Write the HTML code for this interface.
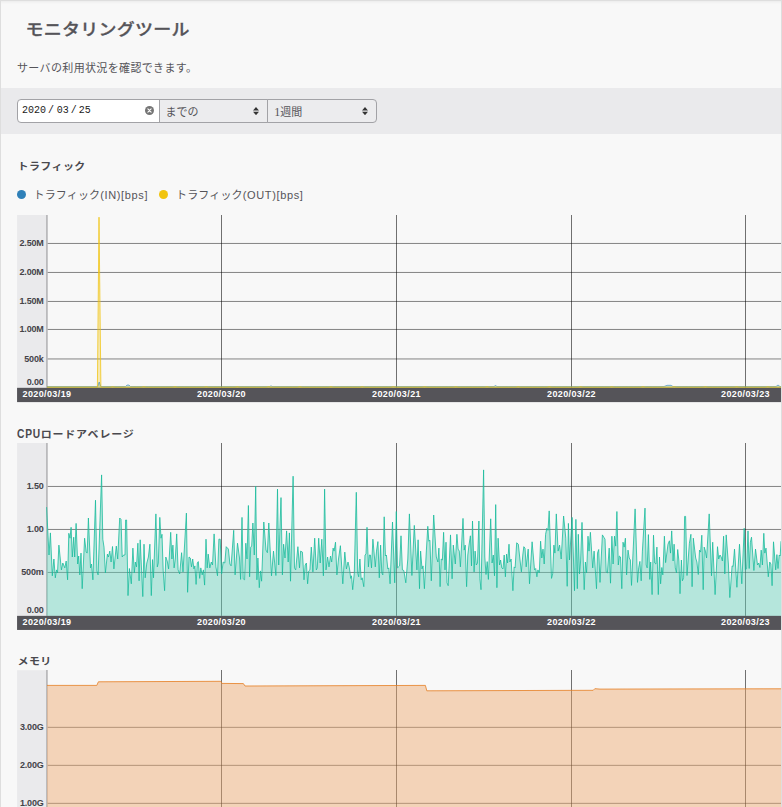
<!DOCTYPE html>
<html lang="ja">
<head>
<meta charset="utf-8">
<title>モニタリングツール</title>
<style>
html,body{margin:0;padding:0;}
body{width:782px;height:807px;overflow:hidden;background:#f8f8f8;font-family:"Liberation Sans","Noto Sans CJK JP",sans-serif;color:#555459;position:relative;}
.frame{position:absolute;left:0;top:0;width:782px;height:830px;box-sizing:border-box;border:1px solid #dedede;box-shadow:inset 0 3px 3px -2px rgba(0,0,0,0.06);pointer-events:none;}
h1{position:absolute;left:25.5px;top:16.4px;margin:0;font-size:18px;line-height:26px;font-weight:500;-webkit-text-stroke:0.35px #555459;transform:scaleY(0.91);transform-origin:0 13.5px;color:#555459;letter-spacing:0.25px;white-space:nowrap;}
.lead{position:absolute;left:17px;top:59px;margin:0;font-size:11px;line-height:18px;color:#555459;white-space:nowrap;letter-spacing:0.35px;}
.bar{position:absolute;left:1px;top:88px;width:780px;height:45.6px;background:#eaeaec;}
.ctl{position:absolute;top:99px;height:24px;box-sizing:border-box;border:1px solid #a2a2a6;font-size:11px;line-height:25.6px;color:#555459;white-space:nowrap;}
.date{left:17px;width:143px;background:#fff;border-radius:4px 0 0 4px;font-family:"Liberation Mono",monospace;color:#1a1a1a;padding-left:4px;font-size:10px;line-height:22px;}
.date i{font-style:normal;margin:0 2.8px 0 2px;}
.sel1{left:159px;width:109px;background:#ececee;padding-left:5.6px;}
.sel2{left:267px;width:110px;background:#ececee;border-radius:0 4px 4px 0;padding-left:6.3px;}
.arrow{position:absolute;right:8px;top:6.9px;width:6px;height:8.2px;}
.clear{position:absolute;left:127px;top:6px;width:9px;height:9px;}
h2{position:absolute;left:17.5px;margin:0;font-size:11px;line-height:16px;font-weight:700;color:#4a494e;white-space:nowrap;letter-spacing:0.4px;transform:scaleY(0.9);transform-origin:0 8.5px;}
.legend{position:absolute;top:187px;left:17px;font-size:11px;line-height:16px;color:#555459;white-space:nowrap;letter-spacing:0.15px;}
.legend b{font-weight:400;letter-spacing:0.65px;}
.dot{position:absolute;top:190px;width:9px;height:9px;border-radius:50%;}
.chart{position:absolute;left:0;}
.chart text{font-family:"Liberation Sans","Noto Sans CJK JP",sans-serif;font-size:9px;font-weight:700;letter-spacing:-0.15px;}
.chart .yl{fill:#444348;}
.chart .xl{fill:#fff;letter-spacing:0.38px;}
</style>
</head>
<body>
<h1>モニタリングツール</h1>
<p class="lead">サーバの利用状況を確認できます。</p>
<div class="bar"></div>
<div class="ctl date">2020<i>/</i>03<i style="margin-right:2px">/</i>25<svg class="clear" viewBox="0 0 9 9"><circle cx="4.5" cy="4.5" r="4.5" fill="#757575"/><path d="M2.9 2.9 L6.1 6.1 M6.1 2.9 L2.9 6.1" stroke="#fff" stroke-width="1.1" stroke-linecap="round"/></svg></div>
<div class="ctl sel1">までの<svg class="arrow" viewBox="0 0 6 8.2"><path d="M3 0 L6 3.5 L0 3.5 Z M3 8.2 L6 4.7 L0 4.7 Z" fill="#333"/></svg></div>
<div class="ctl sel2"><span style="font-family:'Liberation Serif','Noto Sans CJK JP',serif;font-size:12px">1</span>週間<svg class="arrow" viewBox="0 0 6 8.2"><path d="M3 0 L6 3.5 L0 3.5 Z M3 8.2 L6 4.7 L0 4.7 Z" fill="#333"/></svg></div>

<h2 style="top:158px">トラフィック</h2>
<span class="dot" style="left:17px;background:#2f80b8"></span>
<span class="legend" style="left:33.5px">トラフィック<b>(IN)[bps]</b></span>
<span class="dot" style="left:159px;background:#f1c40f"></span>
<span class="legend" style="left:176px">トラフィック<b>(OUT)[bps]</b></span>
<svg class="chart" style="top:215px" width="782" height="188" viewBox="0 0 782 188">
<rect x="17.06" y="0" width="28.94" height="172.8" fill="#eaeaec"/>
<rect x="46.8" y="27.95" width="734.2" height="1" fill="#000" fill-opacity="0.47"/>
<rect x="46.8" y="56.95" width="734.2" height="1" fill="#000" fill-opacity="0.47"/>
<rect x="46.8" y="85.95" width="734.2" height="1" fill="#000" fill-opacity="0.47"/>
<rect x="46.8" y="113.95" width="734.2" height="1" fill="#000" fill-opacity="0.47"/>
<rect x="46.8" y="143.45" width="734.2" height="1" fill="#000" fill-opacity="0.47"/>
<rect x="221.00" y="0" width="1" height="172.8" fill="#000" fill-opacity="0.55"/>
<rect x="396.00" y="0" width="1" height="172.8" fill="#000" fill-opacity="0.55"/>
<rect x="571.00" y="0" width="1" height="172.8" fill="#000" fill-opacity="0.55"/>
<rect x="745.00" y="0" width="1" height="172.8" fill="#000" fill-opacity="0.55"/>
<rect x="46" y="0" width="1.8" height="172.8" fill="#bababc"/>
<polygon points="47.0,172.8 47.0,171.5 97.6,171.5 99.2,167.0 100.8,171.5 125.5,171.5 127.0,170.0 129.0,170.0 130.5,171.5 270.0,171.5 271.0,170.7 272.0,171.5 494.0,171.5 495.5,170.5 497.0,171.5 664.0,171.5 667.0,170.3 671.0,170.3 673.0,171.5 776.0,171.5 778.0,170.0 780.0,171.5 781.0,171.5 781.0,172.8" fill="#2980b9" fill-opacity="0.3"/><polygon points="47.0,172.8 47.0,172.2 97.4,172.2 99.0,2.2 100.9,172.2 103.0,172.2 105.4,172.2 107.8,172.2 110.2,172.2 112.6,171.7 115.0,172.2 117.4,172.2 119.8,172.2 122.2,172.2 124.6,172.2 127.0,172.2 129.4,172.2 131.8,172.2 134.2,172.2 136.6,172.2 139.0,172.2 141.4,172.2 143.8,171.7 146.2,172.2 148.6,172.2 151.0,172.2 153.4,172.2 155.8,172.2 158.2,172.2 160.6,172.2 163.0,172.2 165.4,172.2 167.8,172.2 170.2,172.2 172.6,172.2 175.0,171.7 177.4,172.2 179.8,172.2 182.2,172.2 184.6,172.2 187.0,172.2 189.4,172.2 191.8,172.2 194.2,172.2 196.6,172.2 199.0,172.2 201.4,172.2 203.8,172.2 206.2,171.7 208.6,172.2 211.0,172.2 213.4,172.2 215.8,172.2 218.2,172.2 220.6,172.2 223.0,172.2 225.4,172.2 227.8,172.2 230.2,172.2 232.6,172.2 235.0,172.2 237.4,171.7 239.8,172.2 242.2,172.2 244.6,172.2 247.0,172.2 249.4,172.2 251.8,172.2 254.2,172.2 256.6,172.2 259.0,172.2 261.4,172.2 263.8,172.2 266.2,172.2 268.6,171.7 271.0,172.2 273.4,172.2 275.8,172.2 278.2,172.2 280.6,172.2 283.0,172.2 285.4,172.2 287.8,172.2 290.2,172.2 292.6,172.2 295.0,172.2 297.4,172.2 299.8,171.7 302.2,172.2 304.6,172.2 307.0,172.2 309.4,172.2 311.8,172.2 314.2,172.2 316.6,172.2 319.0,172.2 321.4,172.2 323.8,172.2 326.2,172.2 328.6,172.2 331.0,171.7 333.4,172.2 335.8,172.2 338.2,172.2 340.6,172.2 343.0,172.2 345.4,172.2 347.8,172.2 350.2,172.2 352.6,172.2 355.0,172.2 357.4,172.2 359.8,172.2 362.2,171.7 364.6,172.2 367.0,172.2 369.4,172.2 371.8,172.2 374.2,172.2 376.6,172.2 379.0,172.2 381.4,172.2 383.8,172.2 386.2,172.2 388.6,172.2 391.0,172.2 393.4,171.7 395.8,172.2 398.2,172.2 400.6,172.2 403.0,172.2 405.4,172.2 407.8,172.2 410.2,172.2 412.6,172.2 415.0,172.2 417.4,172.2 419.8,172.2 422.2,172.2 424.6,171.7 427.0,172.2 429.4,172.2 431.8,172.2 434.2,172.2 436.6,172.2 439.0,172.2 441.4,172.2 443.8,172.2 446.2,172.2 448.6,172.2 451.0,172.2 453.4,172.2 455.8,171.7 458.2,172.2 460.6,172.2 463.0,172.2 465.4,172.2 467.8,172.2 470.2,172.2 472.6,172.2 475.0,172.2 477.4,172.2 479.8,172.2 482.2,172.2 484.6,172.2 487.0,171.7 489.4,172.2 491.8,172.2 494.2,172.2 496.6,172.2 499.0,172.2 501.4,172.2 503.8,172.2 506.2,172.2 508.6,172.2 511.0,172.2 513.4,172.2 515.8,172.2 518.2,171.7 520.6,172.2 523.0,172.2 525.4,172.2 527.8,172.2 530.2,172.2 532.6,172.2 535.0,172.2 537.4,172.2 539.8,172.2 542.2,172.2 544.6,172.2 547.0,172.2 549.4,171.7 551.8,172.2 554.2,172.2 556.6,172.2 559.0,172.2 561.4,172.2 563.8,172.2 566.2,172.2 568.6,172.2 571.0,172.2 573.4,172.2 575.8,172.2 578.2,172.2 580.6,171.7 583.0,172.2 585.4,172.2 587.8,172.2 590.2,172.2 592.6,172.2 595.0,172.2 597.4,172.2 599.8,172.2 602.2,172.2 604.6,172.2 607.0,172.2 609.4,172.2 611.8,171.7 614.2,172.2 616.6,172.2 619.0,172.2 621.4,172.2 623.8,172.2 626.2,172.2 628.6,172.2 631.0,172.2 633.4,172.2 635.8,172.2 638.2,172.2 640.6,172.2 643.0,171.7 645.4,172.2 647.8,172.2 650.2,172.2 652.6,172.2 655.0,172.2 657.4,172.2 659.8,172.2 662.2,172.2 664.6,172.2 667.0,172.2 669.4,172.2 671.8,172.2 674.2,171.7 676.6,172.2 679.0,172.2 681.4,172.2 683.8,172.2 686.2,172.2 688.6,172.2 691.0,172.2 693.4,172.2 695.8,172.2 698.2,172.2 700.6,172.2 703.0,172.2 705.4,171.7 707.8,172.2 710.2,172.2 712.6,172.2 715.0,172.2 717.4,172.2 719.8,172.2 722.2,172.2 724.6,172.2 727.0,172.2 729.4,172.2 731.8,172.2 734.2,172.2 736.6,171.7 739.0,172.2 741.4,172.2 743.8,172.2 746.2,172.2 748.6,172.2 751.0,172.2 753.4,172.2 755.8,172.2 758.2,172.2 760.6,172.2 763.0,172.2 765.4,172.2 767.8,171.7 770.2,172.2 772.6,172.2 775.0,172.2 777.4,172.2 779.8,172.2 781.0,172.2 781.0,172.8" fill="#f1c40f" fill-opacity="0.3"/><polyline points="47.0,171.5 97.6,171.5 99.2,167.0 100.8,171.5 125.5,171.5 127.0,170.0 129.0,170.0 130.5,171.5 270.0,171.5 271.0,170.7 272.0,171.5 494.0,171.5 495.5,170.5 497.0,171.5 664.0,171.5 667.0,170.3 671.0,170.3 673.0,171.5 776.0,171.5 778.0,170.0 780.0,171.5 781.0,171.5" fill="none" stroke="#2980b9" stroke-width="0.9" stroke-opacity="0.6"/><polyline points="47.0,172.2 97.4,172.2 99.0,2.2 100.9,172.2 103.0,172.2 105.4,172.2 107.8,172.2 110.2,172.2 112.6,171.7 115.0,172.2 117.4,172.2 119.8,172.2 122.2,172.2 124.6,172.2 127.0,172.2 129.4,172.2 131.8,172.2 134.2,172.2 136.6,172.2 139.0,172.2 141.4,172.2 143.8,171.7 146.2,172.2 148.6,172.2 151.0,172.2 153.4,172.2 155.8,172.2 158.2,172.2 160.6,172.2 163.0,172.2 165.4,172.2 167.8,172.2 170.2,172.2 172.6,172.2 175.0,171.7 177.4,172.2 179.8,172.2 182.2,172.2 184.6,172.2 187.0,172.2 189.4,172.2 191.8,172.2 194.2,172.2 196.6,172.2 199.0,172.2 201.4,172.2 203.8,172.2 206.2,171.7 208.6,172.2 211.0,172.2 213.4,172.2 215.8,172.2 218.2,172.2 220.6,172.2 223.0,172.2 225.4,172.2 227.8,172.2 230.2,172.2 232.6,172.2 235.0,172.2 237.4,171.7 239.8,172.2 242.2,172.2 244.6,172.2 247.0,172.2 249.4,172.2 251.8,172.2 254.2,172.2 256.6,172.2 259.0,172.2 261.4,172.2 263.8,172.2 266.2,172.2 268.6,171.7 271.0,172.2 273.4,172.2 275.8,172.2 278.2,172.2 280.6,172.2 283.0,172.2 285.4,172.2 287.8,172.2 290.2,172.2 292.6,172.2 295.0,172.2 297.4,172.2 299.8,171.7 302.2,172.2 304.6,172.2 307.0,172.2 309.4,172.2 311.8,172.2 314.2,172.2 316.6,172.2 319.0,172.2 321.4,172.2 323.8,172.2 326.2,172.2 328.6,172.2 331.0,171.7 333.4,172.2 335.8,172.2 338.2,172.2 340.6,172.2 343.0,172.2 345.4,172.2 347.8,172.2 350.2,172.2 352.6,172.2 355.0,172.2 357.4,172.2 359.8,172.2 362.2,171.7 364.6,172.2 367.0,172.2 369.4,172.2 371.8,172.2 374.2,172.2 376.6,172.2 379.0,172.2 381.4,172.2 383.8,172.2 386.2,172.2 388.6,172.2 391.0,172.2 393.4,171.7 395.8,172.2 398.2,172.2 400.6,172.2 403.0,172.2 405.4,172.2 407.8,172.2 410.2,172.2 412.6,172.2 415.0,172.2 417.4,172.2 419.8,172.2 422.2,172.2 424.6,171.7 427.0,172.2 429.4,172.2 431.8,172.2 434.2,172.2 436.6,172.2 439.0,172.2 441.4,172.2 443.8,172.2 446.2,172.2 448.6,172.2 451.0,172.2 453.4,172.2 455.8,171.7 458.2,172.2 460.6,172.2 463.0,172.2 465.4,172.2 467.8,172.2 470.2,172.2 472.6,172.2 475.0,172.2 477.4,172.2 479.8,172.2 482.2,172.2 484.6,172.2 487.0,171.7 489.4,172.2 491.8,172.2 494.2,172.2 496.6,172.2 499.0,172.2 501.4,172.2 503.8,172.2 506.2,172.2 508.6,172.2 511.0,172.2 513.4,172.2 515.8,172.2 518.2,171.7 520.6,172.2 523.0,172.2 525.4,172.2 527.8,172.2 530.2,172.2 532.6,172.2 535.0,172.2 537.4,172.2 539.8,172.2 542.2,172.2 544.6,172.2 547.0,172.2 549.4,171.7 551.8,172.2 554.2,172.2 556.6,172.2 559.0,172.2 561.4,172.2 563.8,172.2 566.2,172.2 568.6,172.2 571.0,172.2 573.4,172.2 575.8,172.2 578.2,172.2 580.6,171.7 583.0,172.2 585.4,172.2 587.8,172.2 590.2,172.2 592.6,172.2 595.0,172.2 597.4,172.2 599.8,172.2 602.2,172.2 604.6,172.2 607.0,172.2 609.4,172.2 611.8,171.7 614.2,172.2 616.6,172.2 619.0,172.2 621.4,172.2 623.8,172.2 626.2,172.2 628.6,172.2 631.0,172.2 633.4,172.2 635.8,172.2 638.2,172.2 640.6,172.2 643.0,171.7 645.4,172.2 647.8,172.2 650.2,172.2 652.6,172.2 655.0,172.2 657.4,172.2 659.8,172.2 662.2,172.2 664.6,172.2 667.0,172.2 669.4,172.2 671.8,172.2 674.2,171.7 676.6,172.2 679.0,172.2 681.4,172.2 683.8,172.2 686.2,172.2 688.6,172.2 691.0,172.2 693.4,172.2 695.8,172.2 698.2,172.2 700.6,172.2 703.0,172.2 705.4,171.7 707.8,172.2 710.2,172.2 712.6,172.2 715.0,172.2 717.4,172.2 719.8,172.2 722.2,172.2 724.6,172.2 727.0,172.2 729.4,172.2 731.8,172.2 734.2,172.2 736.6,171.7 739.0,172.2 741.4,172.2 743.8,172.2 746.2,172.2 748.6,172.2 751.0,172.2 753.4,172.2 755.8,172.2 758.2,172.2 760.6,172.2 763.0,172.2 765.4,172.2 767.8,171.7 770.2,172.2 772.6,172.2 775.0,172.2 777.4,172.2 779.8,172.2 781.0,172.2" fill="none" stroke="#f1c40f" stroke-width="0.95" stroke-opacity="0.8" stroke-linejoin="round"/><rect x="47" y="171.65" width="734" height="1.15" fill="#d9c52a" fill-opacity="0.6"/>
<rect x="17.06" y="172.8" width="763.94" height="14.3" fill="#555459"/>
<text class="xl" x="47.0" y="181.8" text-anchor="middle">2020/03/19</text>
<text class="xl" x="221.5" y="181.8" text-anchor="middle">2020/03/20</text>
<text class="xl" x="396.5" y="181.8" text-anchor="middle">2020/03/21</text>
<text class="xl" x="571.5" y="181.8" text-anchor="middle">2020/03/22</text>
<text class="xl" x="745.5" y="181.8" text-anchor="middle">2020/03/23</text>
<text class="yl" x="43.7" y="31.0" text-anchor="end">2.50M</text>
<text class="yl" x="43.7" y="60.0" text-anchor="end">2.00M</text>
<text class="yl" x="43.7" y="89.0" text-anchor="end">1.50M</text>
<text class="yl" x="43.7" y="117.0" text-anchor="end">1.00M</text>
<text class="yl" x="43.7" y="147.0" text-anchor="end">500k</text>
<text class="yl" x="43.7" y="170.2" text-anchor="end">0.00</text>
</svg>

<h2 style="top:426px;letter-spacing:0.8px"><span style="display:inline-block;transform:scale(0.93,1.24);transform-origin:0 11.8px;margin-right:-2px;margin-left:-0.5px">CPU</span>ロードアベレージ</h2>
<svg class="chart" style="top:443px" width="782" height="188" viewBox="0 0 782 188">
<rect x="17.06" y="0" width="28.94" height="172.85000000000002" fill="#eaeaec"/>
<rect x="46.8" y="42.95" width="734.2" height="1" fill="#000" fill-opacity="0.47"/>
<rect x="46.8" y="85.95" width="734.2" height="1" fill="#000" fill-opacity="0.47"/>
<rect x="46.8" y="128.95" width="734.2" height="1" fill="#000" fill-opacity="0.47"/>
<rect x="221.00" y="0" width="1" height="172.85000000000002" fill="#000" fill-opacity="0.55"/>
<rect x="396.00" y="0" width="1" height="172.85000000000002" fill="#000" fill-opacity="0.55"/>
<rect x="571.00" y="0" width="1" height="172.85000000000002" fill="#000" fill-opacity="0.55"/>
<rect x="745.00" y="0" width="1" height="172.85000000000002" fill="#000" fill-opacity="0.55"/>
<rect x="46" y="0" width="1.8" height="172.85000000000002" fill="#bababc"/>
<polygon points="46.6,172.9 46.6,64.1 49.0,112.0 50.4,89.9 52.3,132.8 53.9,116.0 55.3,134.8 56.5,126.9 57.5,129.9 58.9,102.1 61.4,126.9 62.8,120.0 64.8,124.9 66.2,118.0 67.6,136.8 68.8,90.3 70.0,95.2 71.1,84.3 72.3,114.0 73.7,94.2 74.7,114.0 76.1,80.4 77.7,121.0 78.7,113.0 79.8,131.9 81.0,110.1 82.2,145.7 84.6,95.2 86.2,109.1 87.2,110.1 88.4,75.0 90.5,124.9 91.5,121.0 92.9,136.8 95.5,57.2 96.9,127.9 98.1,131.9 101.6,31.9 102.8,96.2 104.0,104.1 105.4,129.9 107.4,111.1 108.4,114.0 109.8,108.1 111.1,119.0 112.5,103.5 113.9,125.9 116.3,103.1 117.7,116.0 119.7,75.0 121.0,76.4 122.2,114.0 123.6,112.0 125.0,112.0 125.6,77.0 126.6,77.0 128.0,152.6 129.4,125.5 131.3,140.8 132.9,105.1 134.3,129.9 135.3,119.0 136.5,123.9 137.9,100.2 139.1,137.8 140.2,96.8 141.6,127.9 142.8,153.6 144.0,101.2 145.2,134.8 146.8,120.0 148.4,114.0 149.9,101.2 151.3,152.6 152.5,116.6 153.5,134.8 155.9,70.9 157.3,123.9 158.3,120.0 159.8,74.4 161.0,95.2 162.0,91.3 163.2,127.9 164.6,147.7 165.8,114.0 167.2,118.0 168.6,125.9 170.7,89.3 171.9,116.0 172.9,102.1 174.1,124.9 175.3,116.0 176.7,90.9 178.1,126.9 179.7,130.9 181.6,109.7 183.0,128.9 186.4,70.1 187.6,149.3 189.0,114.0 190.3,115.0 191.5,123.9 192.7,116.0 193.9,125.9 194.9,122.9 196.1,141.4 197.3,120.0 198.3,118.6 199.7,135.4 200.8,124.9 202.2,131.9 203.4,126.9 204.6,142.1 206.0,96.2 207.2,124.9 208.2,111.1 209.8,124.9 211.3,119.0 212.5,122.0 214.1,90.9 215.9,123.9 217.5,132.8 218.9,96.2 220.2,96.2 221.6,130.9 223.2,119.0 224.8,120.0 226.2,103.7 228.4,106.1 229.9,121.0 231.1,122.9 233.7,87.3 235.1,131.9 237.5,100.2 239.5,115.0 240.6,136.4 242.0,74.4 243.2,135.8 244.6,136.8 245.8,100.2 247.0,116.0 248.4,62.5 249.6,133.8 250.7,104.1 251.7,103.1 252.9,80.0 254.3,112.0 255.7,43.3 256.9,136.8 257.9,115.0 259.3,144.7 260.4,127.9 261.6,138.2 263.8,79.0 266.0,107.1 267.4,109.7 268.8,80.0 271.5,132.8 273.5,108.1 275.9,132.5 277.5,46.1 278.7,122.0 281.0,54.6 282.4,131.9 283.6,101.2 285.0,115.0 286.6,87.9 288.2,119.0 289.4,89.9 290.5,138.2 293.1,33.2 294.5,124.9 295.7,126.9 297.9,103.7 299.5,124.9 300.6,108.1 302.4,109.1 304.0,136.8 305.2,122.0 306.4,120.0 307.6,140.8 308.8,127.9 309.9,126.9 311.3,104.1 312.9,128.9 314.7,95.2 316.3,126.9 317.3,124.9 318.7,95.2 320.2,120.0 321.8,96.2 323.4,132.8 324.6,46.1 326.0,126.9 327.6,114.0 329.0,123.9 330.5,113.0 331.7,119.0 333.1,105.1 334.1,108.1 335.5,99.2 336.9,131.9 338.5,116.0 340.4,102.7 342.8,140.8 344.8,109.1 346.4,125.9 348.0,119.0 349.4,124.9 350.7,135.4 351.5,132.8 352.7,146.7 354.3,129.9 356.3,49.3 357.7,129.9 358.7,133.8 359.9,116.0 361.2,136.8 362.2,134.8 363.8,143.7 365.0,112.0 366.0,111.1 367.0,84.3 368.4,123.9 369.4,112.0 370.4,112.0 371.5,124.9 372.9,96.2 375.3,123.9 376.5,108.1 377.9,98.6 379.3,134.8 380.6,102.1 381.8,129.9 382.8,131.9 384.2,73.8 385.4,113.0 386.4,112.0 387.8,125.9 388.8,124.9 390.1,140.8 392.5,79.0 394.7,139.8 396.3,68.5 397.5,124.9 399.6,122.9 401.0,92.8 402.4,126.9 403.8,127.5 405.8,139.8 407.8,116.0 409.4,70.9 411.9,132.5 414.3,82.4 416.9,126.9 418.1,96.8 419.5,145.7 420.6,108.1 422.0,125.9 423.0,122.9 424.4,145.7 426.4,107.1 427.8,83.3 428.8,98.2 429.9,97.2 431.3,137.8 433.7,72.0 436.3,114.0 437.9,119.0 438.9,105.1 440.1,143.7 441.2,116.0 442.4,117.0 443.6,89.3 445.0,126.9 446.0,99.2 447.0,139.8 448.2,142.7 450.5,91.9 452.1,135.8 453.3,102.1 455.3,121.0 456.9,91.3 458.1,106.1 459.3,108.1 460.4,123.9 463.0,75.4 464.2,107.1 465.2,102.1 466.6,143.7 467.8,112.0 469.0,102.1 470.4,92.8 471.5,122.9 472.5,78.0 474.1,128.9 475.1,108.1 476.3,122.0 477.5,120.0 478.9,78.0 479.9,135.8 481.0,146.7 483.6,26.9 484.8,114.0 486.0,131.5 487.2,118.6 488.4,136.4 490.7,75.8 492.1,120.0 493.3,112.0 494.5,132.8 495.7,61.6 496.9,144.7 498.1,95.2 499.5,122.0 500.6,117.0 501.8,124.9 503.0,125.9 504.2,112.0 505.4,133.8 506.6,111.1 507.6,120.0 509.0,101.2 509.9,119.0 511.1,116.0 512.9,147.7 514.1,123.9 515.1,124.9 516.7,99.8 518.3,101.2 519.9,116.0 521.4,128.9 522.8,112.0 523.8,103.7 525.0,105.1 526.2,123.9 528.2,106.1 529.5,140.8 532.1,98.8 534.5,126.9 535.7,125.5 536.9,133.8 537.9,126.9 539.3,129.9 540.6,98.2 541.8,115.0 543.0,106.1 544.2,121.0 545.6,91.3 546.8,85.3 548.0,87.3 549.2,67.9 551.5,135.4 552.7,130.9 553.9,102.1 554.9,110.1 556.3,70.9 558.1,108.1 559.6,102.1 561.2,116.0 563.6,73.0 565.8,95.2 567.2,143.3 568.4,80.4 569.5,117.0 572.1,74.4 574.5,147.7 575.9,76.4 577.3,145.7 578.3,91.3 579.5,130.9 580.6,118.0 582.0,79.4 584.2,146.7 585.4,119.0 586.6,129.9 588.0,93.2 589.0,108.1 590.4,89.3 592.7,124.9 594.1,108.1 596.5,145.7 597.5,110.1 598.7,106.5 600.0,139.4 602.4,91.9 603.8,94.2 605.0,96.2 606.2,128.9 607.4,129.9 609.2,105.1 610.5,140.2 611.9,93.2 613.1,121.0 614.5,93.2 615.7,103.1 616.9,68.5 618.3,122.0 619.3,113.0 620.5,114.0 621.8,145.7 623.0,99.2 624.2,104.1 625.4,95.2 626.6,131.9 628.0,107.1 629.2,115.0 630.4,117.0 631.5,142.4 635.1,65.9 637.5,139.4 638.7,124.9 639.9,118.4 641.2,137.8 642.4,108.1 645.0,65.1 646.2,122.0 647.2,124.9 648.4,91.6 649.8,136.4 650.7,119.0 652.1,151.6 653.5,92.2 654.7,120.0 655.9,121.0 656.9,104.1 658.3,151.6 659.5,114.0 660.6,140.8 661.8,124.5 662.8,131.9 664.4,93.2 665.6,119.6 668.0,101.2 669.4,97.8 670.5,110.1 671.7,87.9 673.1,118.0 674.1,101.2 675.3,124.9 676.5,129.9 677.7,106.5 678.9,118.0 680.0,150.7 681.4,117.0 682.4,137.8 683.6,134.8 684.6,73.4 685.6,73.4 687.0,132.5 689.4,100.2 690.9,91.3 692.1,143.7 693.3,95.2 695.7,115.0 696.9,119.0 698.3,131.5 699.5,107.1 700.6,109.1 701.8,92.2 703.2,146.7 704.2,104.1 705.4,108.1 706.6,115.0 709.2,70.9 711.5,132.8 712.7,99.2 715.1,151.6 717.5,103.7 718.7,116.0 720.0,112.0 721.2,114.0 722.4,118.0 723.6,93.2 724.8,130.9 726.2,91.9 728.4,121.0 729.8,154.6 732.1,122.9 733.1,123.5 734.5,106.1 736.9,144.3 739.5,101.2 741.8,140.8 744.2,85.3 745.4,126.9 746.6,125.9 748.0,87.9 749.2,125.5 750.4,99.2 751.5,94.2 753.9,127.5 755.5,106.1 757.5,122.0 758.7,120.0 759.9,124.5 761.2,107.1 762.4,122.0 763.8,90.3 764.8,110.1 766.0,105.1 768.3,133.8 769.7,119.0 770.9,121.0 772.1,142.7 773.5,98.8 775.7,126.9 776.9,111.6 778.0,125.5 779.2,112.0 780.2,113.0 781.0,98.2 781.0,172.9" fill="#63d0ba" fill-opacity="0.45"/><polyline points="46.6,64.1 49.0,112.0 50.4,89.9 52.3,132.8 53.9,116.0 55.3,134.8 56.5,126.9 57.5,129.9 58.9,102.1 61.4,126.9 62.8,120.0 64.8,124.9 66.2,118.0 67.6,136.8 68.8,90.3 70.0,95.2 71.1,84.3 72.3,114.0 73.7,94.2 74.7,114.0 76.1,80.4 77.7,121.0 78.7,113.0 79.8,131.9 81.0,110.1 82.2,145.7 84.6,95.2 86.2,109.1 87.2,110.1 88.4,75.0 90.5,124.9 91.5,121.0 92.9,136.8 95.5,57.2 96.9,127.9 98.1,131.9 101.6,31.9 102.8,96.2 104.0,104.1 105.4,129.9 107.4,111.1 108.4,114.0 109.8,108.1 111.1,119.0 112.5,103.5 113.9,125.9 116.3,103.1 117.7,116.0 119.7,75.0 121.0,76.4 122.2,114.0 123.6,112.0 125.0,112.0 125.6,77.0 126.6,77.0 128.0,152.6 129.4,125.5 131.3,140.8 132.9,105.1 134.3,129.9 135.3,119.0 136.5,123.9 137.9,100.2 139.1,137.8 140.2,96.8 141.6,127.9 142.8,153.6 144.0,101.2 145.2,134.8 146.8,120.0 148.4,114.0 149.9,101.2 151.3,152.6 152.5,116.6 153.5,134.8 155.9,70.9 157.3,123.9 158.3,120.0 159.8,74.4 161.0,95.2 162.0,91.3 163.2,127.9 164.6,147.7 165.8,114.0 167.2,118.0 168.6,125.9 170.7,89.3 171.9,116.0 172.9,102.1 174.1,124.9 175.3,116.0 176.7,90.9 178.1,126.9 179.7,130.9 181.6,109.7 183.0,128.9 186.4,70.1 187.6,149.3 189.0,114.0 190.3,115.0 191.5,123.9 192.7,116.0 193.9,125.9 194.9,122.9 196.1,141.4 197.3,120.0 198.3,118.6 199.7,135.4 200.8,124.9 202.2,131.9 203.4,126.9 204.6,142.1 206.0,96.2 207.2,124.9 208.2,111.1 209.8,124.9 211.3,119.0 212.5,122.0 214.1,90.9 215.9,123.9 217.5,132.8 218.9,96.2 220.2,96.2 221.6,130.9 223.2,119.0 224.8,120.0 226.2,103.7 228.4,106.1 229.9,121.0 231.1,122.9 233.7,87.3 235.1,131.9 237.5,100.2 239.5,115.0 240.6,136.4 242.0,74.4 243.2,135.8 244.6,136.8 245.8,100.2 247.0,116.0 248.4,62.5 249.6,133.8 250.7,104.1 251.7,103.1 252.9,80.0 254.3,112.0 255.7,43.3 256.9,136.8 257.9,115.0 259.3,144.7 260.4,127.9 261.6,138.2 263.8,79.0 266.0,107.1 267.4,109.7 268.8,80.0 271.5,132.8 273.5,108.1 275.9,132.5 277.5,46.1 278.7,122.0 281.0,54.6 282.4,131.9 283.6,101.2 285.0,115.0 286.6,87.9 288.2,119.0 289.4,89.9 290.5,138.2 293.1,33.2 294.5,124.9 295.7,126.9 297.9,103.7 299.5,124.9 300.6,108.1 302.4,109.1 304.0,136.8 305.2,122.0 306.4,120.0 307.6,140.8 308.8,127.9 309.9,126.9 311.3,104.1 312.9,128.9 314.7,95.2 316.3,126.9 317.3,124.9 318.7,95.2 320.2,120.0 321.8,96.2 323.4,132.8 324.6,46.1 326.0,126.9 327.6,114.0 329.0,123.9 330.5,113.0 331.7,119.0 333.1,105.1 334.1,108.1 335.5,99.2 336.9,131.9 338.5,116.0 340.4,102.7 342.8,140.8 344.8,109.1 346.4,125.9 348.0,119.0 349.4,124.9 350.7,135.4 351.5,132.8 352.7,146.7 354.3,129.9 356.3,49.3 357.7,129.9 358.7,133.8 359.9,116.0 361.2,136.8 362.2,134.8 363.8,143.7 365.0,112.0 366.0,111.1 367.0,84.3 368.4,123.9 369.4,112.0 370.4,112.0 371.5,124.9 372.9,96.2 375.3,123.9 376.5,108.1 377.9,98.6 379.3,134.8 380.6,102.1 381.8,129.9 382.8,131.9 384.2,73.8 385.4,113.0 386.4,112.0 387.8,125.9 388.8,124.9 390.1,140.8 392.5,79.0 394.7,139.8 396.3,68.5 397.5,124.9 399.6,122.9 401.0,92.8 402.4,126.9 403.8,127.5 405.8,139.8 407.8,116.0 409.4,70.9 411.9,132.5 414.3,82.4 416.9,126.9 418.1,96.8 419.5,145.7 420.6,108.1 422.0,125.9 423.0,122.9 424.4,145.7 426.4,107.1 427.8,83.3 428.8,98.2 429.9,97.2 431.3,137.8 433.7,72.0 436.3,114.0 437.9,119.0 438.9,105.1 440.1,143.7 441.2,116.0 442.4,117.0 443.6,89.3 445.0,126.9 446.0,99.2 447.0,139.8 448.2,142.7 450.5,91.9 452.1,135.8 453.3,102.1 455.3,121.0 456.9,91.3 458.1,106.1 459.3,108.1 460.4,123.9 463.0,75.4 464.2,107.1 465.2,102.1 466.6,143.7 467.8,112.0 469.0,102.1 470.4,92.8 471.5,122.9 472.5,78.0 474.1,128.9 475.1,108.1 476.3,122.0 477.5,120.0 478.9,78.0 479.9,135.8 481.0,146.7 483.6,26.9 484.8,114.0 486.0,131.5 487.2,118.6 488.4,136.4 490.7,75.8 492.1,120.0 493.3,112.0 494.5,132.8 495.7,61.6 496.9,144.7 498.1,95.2 499.5,122.0 500.6,117.0 501.8,124.9 503.0,125.9 504.2,112.0 505.4,133.8 506.6,111.1 507.6,120.0 509.0,101.2 509.9,119.0 511.1,116.0 512.9,147.7 514.1,123.9 515.1,124.9 516.7,99.8 518.3,101.2 519.9,116.0 521.4,128.9 522.8,112.0 523.8,103.7 525.0,105.1 526.2,123.9 528.2,106.1 529.5,140.8 532.1,98.8 534.5,126.9 535.7,125.5 536.9,133.8 537.9,126.9 539.3,129.9 540.6,98.2 541.8,115.0 543.0,106.1 544.2,121.0 545.6,91.3 546.8,85.3 548.0,87.3 549.2,67.9 551.5,135.4 552.7,130.9 553.9,102.1 554.9,110.1 556.3,70.9 558.1,108.1 559.6,102.1 561.2,116.0 563.6,73.0 565.8,95.2 567.2,143.3 568.4,80.4 569.5,117.0 572.1,74.4 574.5,147.7 575.9,76.4 577.3,145.7 578.3,91.3 579.5,130.9 580.6,118.0 582.0,79.4 584.2,146.7 585.4,119.0 586.6,129.9 588.0,93.2 589.0,108.1 590.4,89.3 592.7,124.9 594.1,108.1 596.5,145.7 597.5,110.1 598.7,106.5 600.0,139.4 602.4,91.9 603.8,94.2 605.0,96.2 606.2,128.9 607.4,129.9 609.2,105.1 610.5,140.2 611.9,93.2 613.1,121.0 614.5,93.2 615.7,103.1 616.9,68.5 618.3,122.0 619.3,113.0 620.5,114.0 621.8,145.7 623.0,99.2 624.2,104.1 625.4,95.2 626.6,131.9 628.0,107.1 629.2,115.0 630.4,117.0 631.5,142.4 635.1,65.9 637.5,139.4 638.7,124.9 639.9,118.4 641.2,137.8 642.4,108.1 645.0,65.1 646.2,122.0 647.2,124.9 648.4,91.6 649.8,136.4 650.7,119.0 652.1,151.6 653.5,92.2 654.7,120.0 655.9,121.0 656.9,104.1 658.3,151.6 659.5,114.0 660.6,140.8 661.8,124.5 662.8,131.9 664.4,93.2 665.6,119.6 668.0,101.2 669.4,97.8 670.5,110.1 671.7,87.9 673.1,118.0 674.1,101.2 675.3,124.9 676.5,129.9 677.7,106.5 678.9,118.0 680.0,150.7 681.4,117.0 682.4,137.8 683.6,134.8 684.6,73.4 685.6,73.4 687.0,132.5 689.4,100.2 690.9,91.3 692.1,143.7 693.3,95.2 695.7,115.0 696.9,119.0 698.3,131.5 699.5,107.1 700.6,109.1 701.8,92.2 703.2,146.7 704.2,104.1 705.4,108.1 706.6,115.0 709.2,70.9 711.5,132.8 712.7,99.2 715.1,151.6 717.5,103.7 718.7,116.0 720.0,112.0 721.2,114.0 722.4,118.0 723.6,93.2 724.8,130.9 726.2,91.9 728.4,121.0 729.8,154.6 732.1,122.9 733.1,123.5 734.5,106.1 736.9,144.3 739.5,101.2 741.8,140.8 744.2,85.3 745.4,126.9 746.6,125.9 748.0,87.9 749.2,125.5 750.4,99.2 751.5,94.2 753.9,127.5 755.5,106.1 757.5,122.0 758.7,120.0 759.9,124.5 761.2,107.1 762.4,122.0 763.8,90.3 764.8,110.1 766.0,105.1 768.3,133.8 769.7,119.0 770.9,121.0 772.1,142.7 773.5,98.8 775.7,126.9 776.9,111.6 778.0,125.5 779.2,112.0 780.2,113.0 781.0,98.2" fill="none" stroke="#1abc9c" stroke-opacity="0.8" stroke-width="1.0" stroke-linejoin="round"/>
<rect x="17.06" y="172.85000000000002" width="763.94" height="14.1" fill="#555459"/>
<text class="xl" x="47.0" y="181.7" text-anchor="middle">2020/03/19</text>
<text class="xl" x="221.5" y="181.7" text-anchor="middle">2020/03/20</text>
<text class="xl" x="396.5" y="181.7" text-anchor="middle">2020/03/21</text>
<text class="xl" x="571.5" y="181.7" text-anchor="middle">2020/03/22</text>
<text class="xl" x="745.5" y="181.7" text-anchor="middle">2020/03/23</text>
<text class="yl" x="43.7" y="46.0" text-anchor="end">1.50</text>
<text class="yl" x="43.7" y="89.0" text-anchor="end">1.00</text>
<text class="yl" x="43.7" y="132.0" text-anchor="end">500m</text>
<text class="yl" x="43.7" y="170.0" text-anchor="end">0.00</text>
</svg>

<h2 style="top:653px">メモリ</h2>
<svg class="chart" style="top:670px" width="782" height="137" viewBox="0 0 782 137">
<rect x="17.06" y="0.2" width="28.94" height="137" fill="#eaeaec"/>
<rect x="46.8" y="56.85" width="734.2" height="1" fill="#000" fill-opacity="0.47"/>
<rect x="46.8" y="94.85" width="734.2" height="1" fill="#000" fill-opacity="0.47"/>
<rect x="46.8" y="132.85" width="734.2" height="1" fill="#000" fill-opacity="0.47"/>
<rect x="221.00" y="0" width="1" height="137" fill="#000" fill-opacity="0.55"/>
<rect x="396.00" y="0" width="1" height="137" fill="#000" fill-opacity="0.55"/>
<rect x="571.00" y="0" width="1" height="137" fill="#000" fill-opacity="0.55"/>
<rect x="745.00" y="0" width="1" height="137" fill="#000" fill-opacity="0.55"/>
<rect x="46" y="0" width="1.8" height="137" fill="#bababc"/>
<polygon points="47.0,140.0 47.0,15.4 96.8,15.4 98.4,11.8 220.8,11.3 222.0,13.4 243.4,13.6 245.0,16.0 425.4,15.4 426.8,20.8 593.2,20.3 594.8,18.7 600.0,19.1 781.0,18.8 781.0,140.0" fill="#eda66a" fill-opacity="0.45"/><polyline points="47.0,15.4 96.8,15.4 98.4,11.8 220.8,11.3 222.0,13.4 243.4,13.6 245.0,16.0 425.4,15.4 426.8,20.8 593.2,20.3 594.8,18.7 600.0,19.1 781.0,18.8" fill="none" stroke="#e67e22" stroke-opacity="0.8" stroke-width="1"/>
<text class="yl" x="43.7" y="60.0" text-anchor="end">3.00G</text>
<text class="yl" x="43.7" y="98.0" text-anchor="end">2.00G</text>
<text class="yl" x="43.7" y="136.0" text-anchor="end">1.00G</text>
</svg>
<div class="frame"></div>
</body>
</html>
